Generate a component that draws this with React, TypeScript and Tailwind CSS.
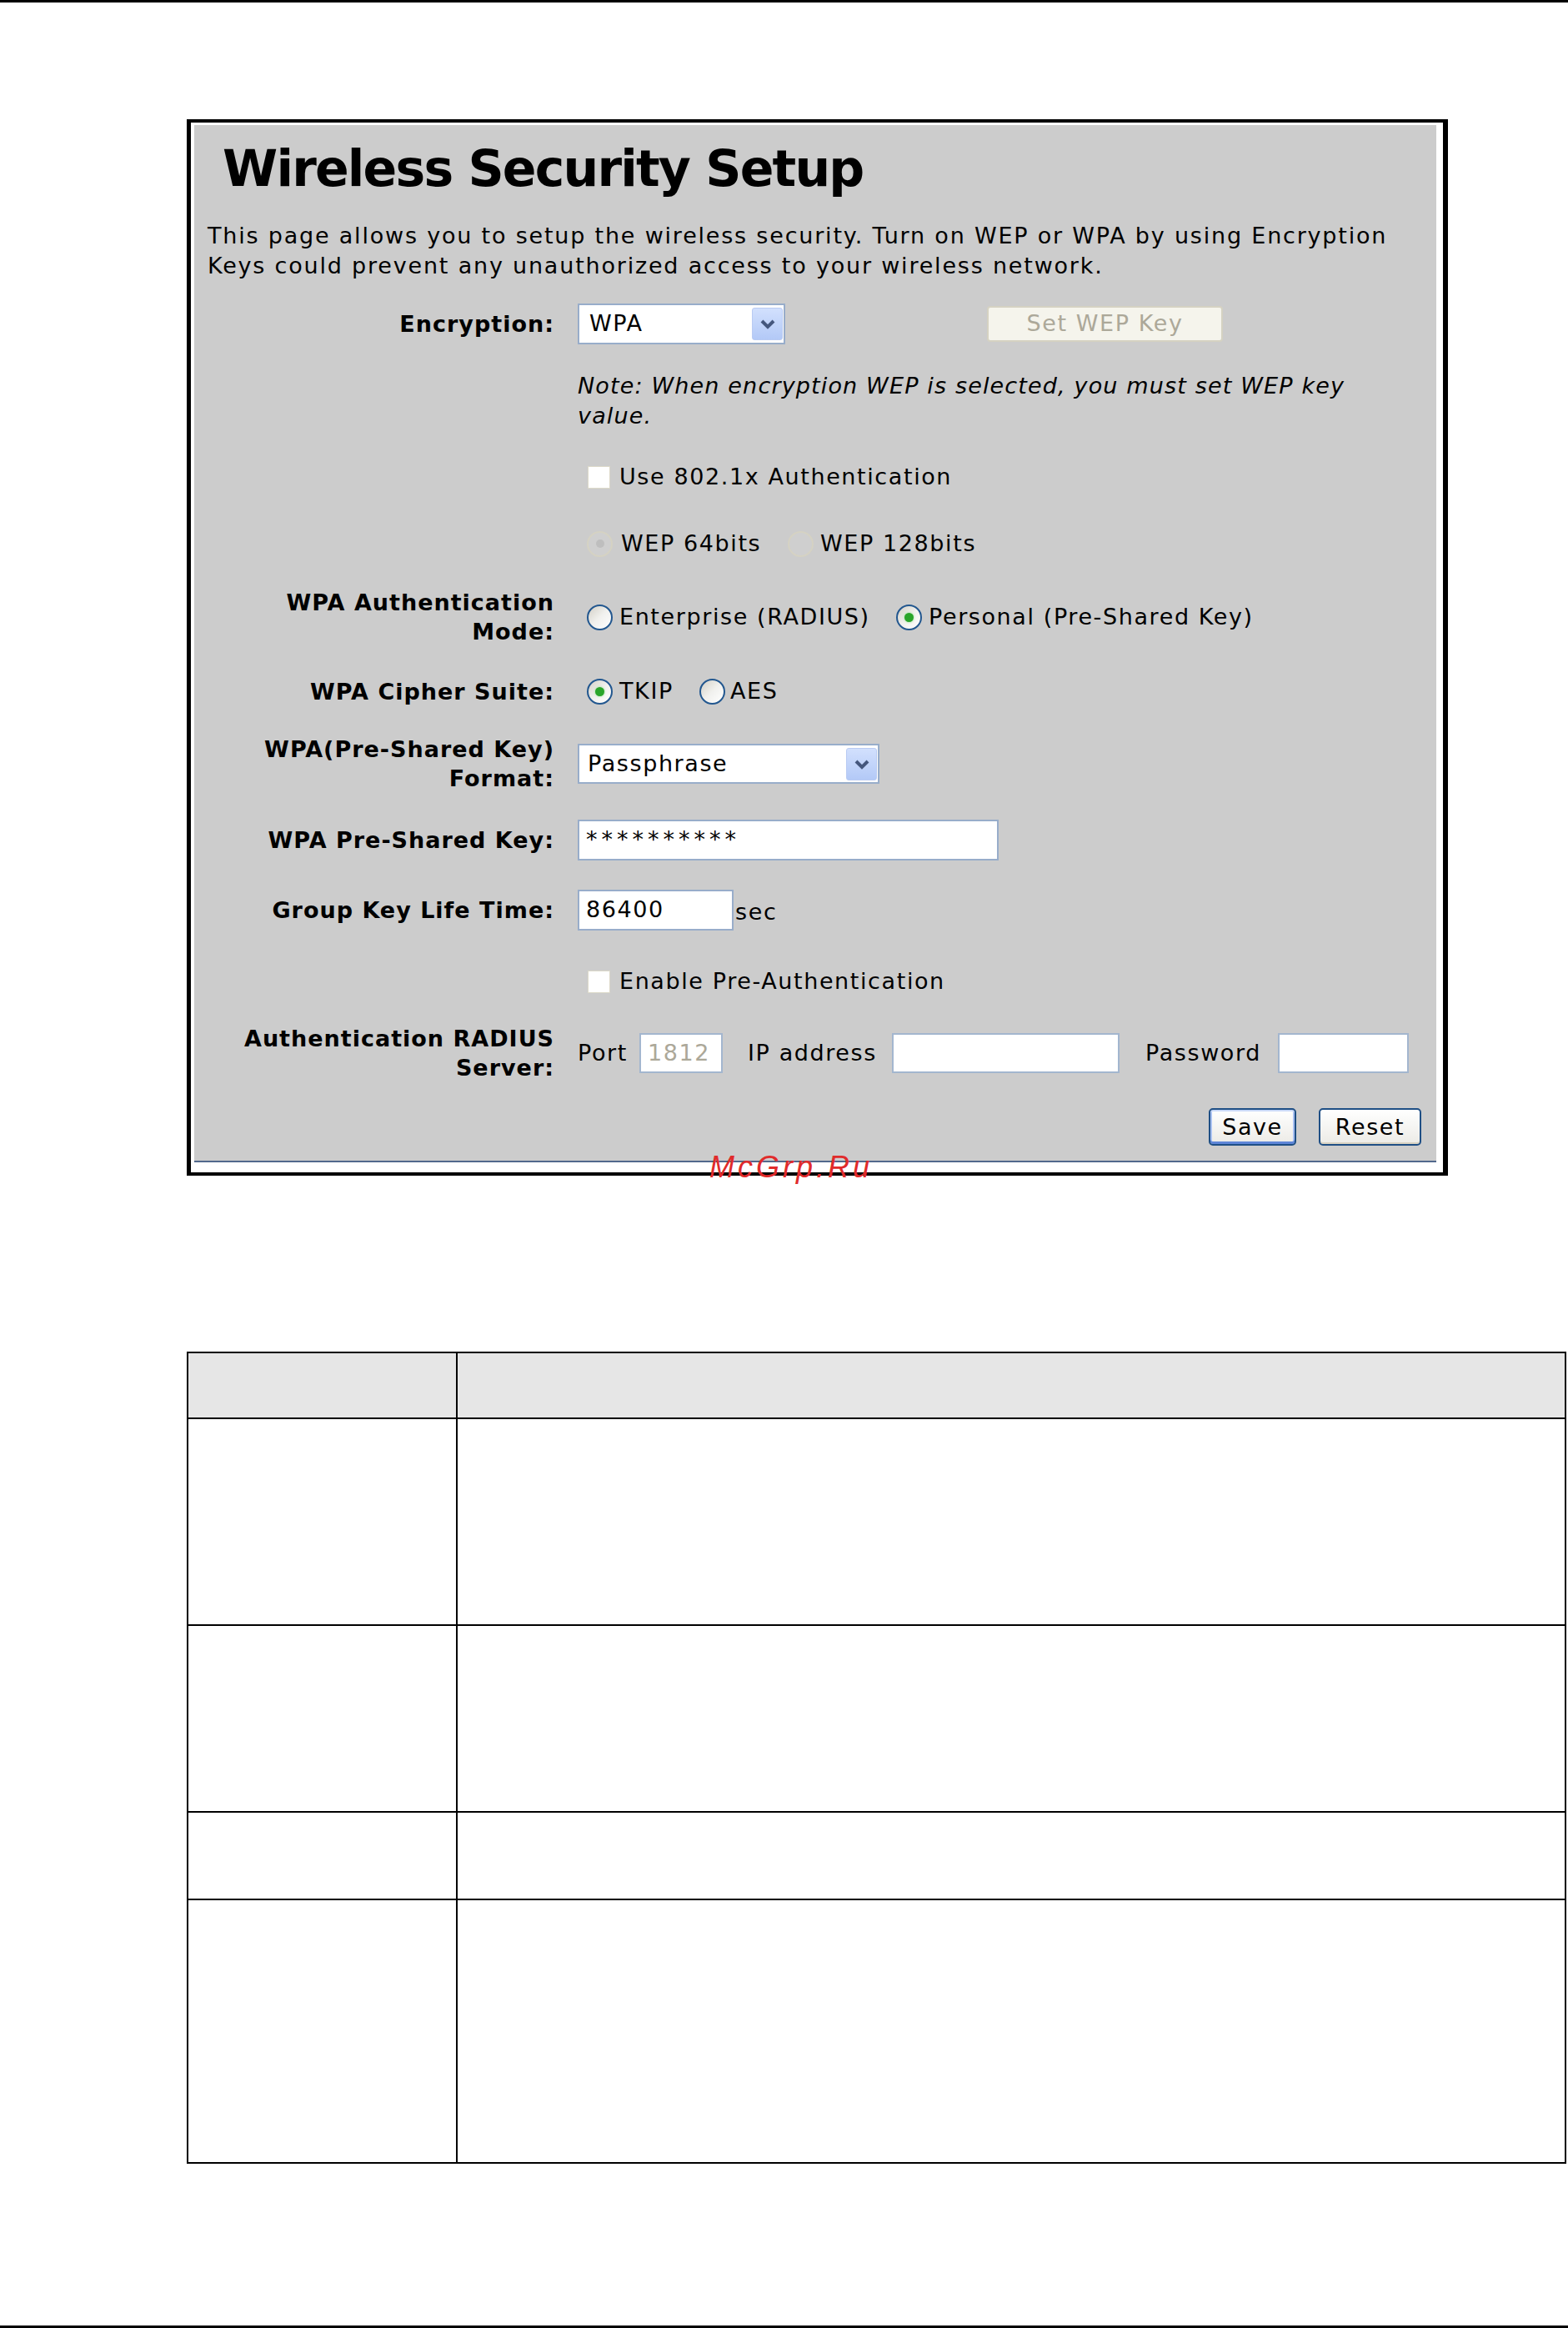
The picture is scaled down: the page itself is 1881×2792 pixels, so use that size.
import React from "react";

function Radio({ checked = false, disabled = false }: { checked?: boolean; disabled?: boolean }) {
	if (disabled) {
		return (
			<span className="flex h-[31px] w-[31px] shrink-0 items-center justify-center rounded-full border-2 border-[#d5d2c3] bg-[#cfcfcf]">
				{checked && <span className="h-[10px] w-[10px] rounded-full bg-[#bebebe]" />}
			</span>
		);
	}
	return (
		<span className="flex h-[31px] w-[31px] shrink-0 items-center justify-center rounded-full border-2 border-[#22578f] bg-linear-to-br from-[#d3d0c7] via-[#f1f1ee] to-white">
			{checked && <span className="h-[11px] w-[11px] rounded-full bg-[#2aa52a] shadow-[0_0_3px_#8fe08f]" />}
		</span>
	);
}

function Checkbox() {
	return <span className="h-[27px] w-[27px] shrink-0 border border-[#dcd9c9] bg-white" />;
}

function Chevron() {
	return (
		<div className="flex h-[39px] w-[37px] items-center justify-center rounded-[3px] border border-[#b9cbf3] bg-linear-to-b from-[#d2e0fd] to-[#b3c9f7]">
			<svg width="20" height="13" viewBox="0 0 20 13">
				<polyline points="3,3 10,10 17,3" fill="none" stroke="#45577d" strokeWidth="4" />
			</svg>
		</div>
	);
}

function Label({ children }: { children: React.ReactNode }) {
	return <div className="text-right font-bold leading-[35px] tracking-[1px]">{children}</div>;
}

export default function App() {
	return (
		<div className="flex h-[2792px] w-full flex-col bg-white font-['DejaVu_Sans',sans-serif] text-[27px] text-black">
			<div className="h-[3px] w-full bg-black" />

			{/* screenshot frame */}
			<div className="relative ml-[224px] mt-[140px] w-[1513px] border-t-[4px] border-r-[6px] border-b-[4px] border-l-[5px] border-black bg-white pt-[3px] pr-[8px] pb-[12px] pl-[4px]">
				<div className="flex h-[1244px] w-[1490px] flex-col border-b-2 border-[#52698c] bg-[#cccccc] pt-[17px] leading-[36px] tracking-[1.6px]">
					<h1 className="pl-[34px] text-[60px] font-bold leading-[70px] tracking-[-1.8px]">Wireless Security Setup</h1>
					<p className="mt-[28px] pl-[16px] tracking-[1.8px]">
						This page allows you to setup the wireless security. Turn on WEP or WPA by using Encryption
						<br />
						Keys could prevent any unauthorized access to your wireless network.
					</p>

					<div className="mt-[26px] grid h-[50px] grid-cols-[432px_1fr] items-center gap-x-[28px]">
						<Label>Encryption:</Label>
						<div className="flex items-center">
							<div className="flex h-[49px] w-[249px] items-center justify-between border-2 border-[#98adca] bg-white pl-[12px] pr-[1px]">
								<span>WPA</span>
								<Chevron />
							</div>
							<button className="ml-[242px] h-[43px] w-[283px] rounded-[4px] border-2 border-[#d5d2c2] bg-[#f5f4ec] text-[#aca899]">Set WEP Key</button>
						</div>
					</div>

					<div className="mt-[32px] grid h-[72px] grid-cols-[432px_1fr] gap-x-[28px]">
						<div />
						<p className="italic tracking-[1.15px]">
							Note: When encryption WEP is selected, you must set WEP key
							<br />
							value.
						</p>
					</div>

					<div className="mt-[30px] grid h-[50px] grid-cols-[432px_1fr] items-center gap-x-[28px]">
						<div />
						<div className="flex items-center gap-[11px] pl-[12px]">
							<Checkbox />
							<span>Use 802.1x Authentication</span>
						</div>
					</div>

					<div className="mt-[30px] grid h-[50px] grid-cols-[432px_1fr] items-center gap-x-[28px]">
						<div />
						<div className="flex items-center pl-[11px]">
							<div className="flex w-[241px] items-center gap-[10px]">
								<Radio disabled checked />
								<span>WEP 64bits</span>
							</div>
							<div className="flex items-center gap-[8px]">
								<Radio disabled />
								<span>WEP 128bits</span>
							</div>
						</div>
					</div>

					<div className="mt-[27px] grid h-[72px] grid-cols-[432px_1fr] items-center gap-x-[28px]">
						<Label>
							WPA Authentication
							<br />
							Mode:
						</Label>
						<div className="flex items-center pl-[11px]">
							<div className="flex w-[371px] items-center gap-[8px]">
								<Radio />
								<span>Enterprise (RADIUS)</span>
							</div>
							<div className="flex items-center gap-[8px]">
								<Radio checked />
								<span>Personal (Pre-Shared Key)</span>
							</div>
						</div>
					</div>

					<div className="mt-[28px] grid h-[50px] grid-cols-[432px_1fr] items-center gap-x-[28px]">
						<Label>WPA Cipher Suite:</Label>
						<div className="flex items-center pl-[11px]">
							<div className="flex w-[135px] items-center gap-[8px]">
								<Radio checked />
								<span>TKIP</span>
							</div>
							<div className="flex items-center gap-[6px]">
								<Radio />
								<span>AES</span>
							</div>
						</div>
					</div>

					<div className="mt-[27px] grid h-[70px] grid-cols-[432px_1fr] items-center gap-x-[28px]">
						<Label>
							WPA(Pre-Shared Key)
							<br />
							Format:
						</Label>
						<div className="flex items-center">
							<div className="flex h-[48px] w-[362px] items-center justify-between border-2 border-[#98adca] bg-white pl-[10px] pr-[1px]">
								<span>Passphrase</span>
								<Chevron />
							</div>
						</div>
					</div>

					<div className="mt-[31px] grid h-[50px] grid-cols-[432px_1fr] items-center gap-x-[28px]">
						<Label>WPA Pre-Shared Key:</Label>
						<div className="flex items-center">
							<div className="flex h-[49px] w-[505px] items-center border-2 border-[#98adca] bg-white pl-[8px] tracking-[5px]">**********</div>
						</div>
					</div>

					<div className="mt-[34px] grid h-[50px] grid-cols-[432px_1fr] items-center gap-x-[28px]">
						<Label>Group Key Life Time:</Label>
						<div className="flex items-center">
							<div className="flex h-[49px] w-[187px] items-center border-2 border-[#98adca] bg-white pl-[8px]">86400</div>
							<span className="ml-[2px] mt-[6px]">sec</span>
						</div>
					</div>

					<div className="mt-[36px] grid h-[50px] grid-cols-[432px_1fr] items-center gap-x-[28px]">
						<div />
						<div className="flex items-center gap-[11px] pl-[12px]">
							<Checkbox />
							<span>Enable Pre-Authentication</span>
						</div>
					</div>

					<div className="mt-[26px] grid h-[70px] grid-cols-[432px_1fr] items-center gap-x-[28px]">
						<Label>
							Authentication RADIUS
							<br />
							Server:
						</Label>
						<div className="flex items-center">
							<span className="w-[74px]">Port</span>
							<div className="flex h-[48px] w-[100px] items-center border-2 border-[#a3b6cf] bg-white pl-[8px] text-[#aca899]">1812</div>
							<span className="ml-[30px] w-[173px]">IP address</span>
							<div className="h-[48px] w-[273px] border-2 border-[#a3b6cf] bg-white" />
							<span className="ml-[31px] w-[159px]">Password</span>
							<div className="h-[48px] w-[157px] border-2 border-[#a3b6cf] bg-white" />
						</div>
					</div>

					<div className="mt-[31px] flex justify-end gap-[27px] pr-[18px]">
						<button className="h-[45px] w-[105px] rounded-[5px] border-2 border-[#1f4f85] bg-linear-to-b from-white to-[#ecebe6] shadow-[inset_0_-3px_0_#5e86d8,inset_0_2px_0_#cad9f7,inset_2px_0_0_#a9c1f2,inset_-2px_0_0_#a9c1f2]">Save</button>
						<button className="h-[45px] w-[123px] rounded-[5px] border-2 border-[#1f4f85] bg-linear-to-b from-white to-[#ecebe6] shadow-[inset_0_-2px_0_#d8d2c2]">Reset</button>
					</div>
				</div>

				<span className="absolute left-[622px] top-[1235px] font-['Liberation_Sans',sans-serif] text-[36px] italic leading-[36px] tracking-[4px] text-[#e02b2b]">McGrp.Ru</span>
			</div>

			{/* parameter table */}
			<div className="ml-[224px] mt-[211px] w-[1655px] border-2 border-black">
				<div className="flex h-[79px] border-b-2 border-black bg-[#e6e6e6]">
					<div className="w-[323px] border-r-2 border-black" />
					<div className="flex-1" />
				</div>
				<div className="flex h-[248px] border-b-2 border-black">
					<div className="w-[323px] border-r-2 border-black" />
					<div className="flex-1" />
				</div>
				<div className="flex h-[224px] border-b-2 border-black">
					<div className="w-[323px] border-r-2 border-black" />
					<div className="flex-1" />
				</div>
				<div className="flex h-[105px] border-b-2 border-black">
					<div className="w-[323px] border-r-2 border-black" />
					<div className="flex-1" />
				</div>
				<div className="flex h-[314px]">
					<div className="w-[323px] border-r-2 border-black" />
					<div className="flex-1" />
				</div>
			</div>

			<div className="mt-auto h-[3px] w-full bg-black" />
		</div>
	);
}
